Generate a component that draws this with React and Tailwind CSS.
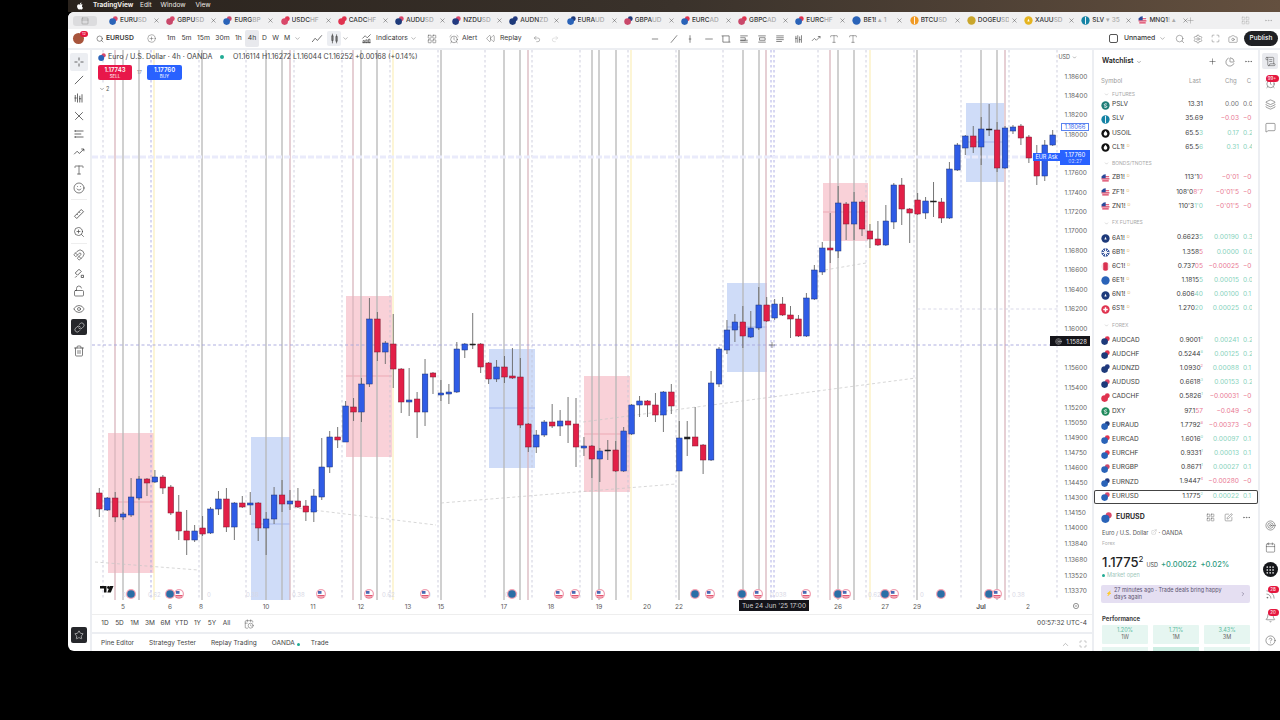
import React from "react";
import { FaApple } from "react-icons/fa";
import {
  AlarmClock, Bell, Calendar, CalendarClock, Camera, ChartPie, ChevronDown, ChevronRight, ChevronUp, CircleHelp, CirclePlus,
  Ellipsis, ExternalLink, Eye, Grip, Layers, LayoutGrid, Link, LockOpen, Magnet, Maximize, MessageSquare, PanelTop, Plus,
  Rewind, Redo2, Rss, ScrollText, Search, Settings, Smile, SquarePen, Star, Target, Trash2, Type, Undo2, X, ZoomIn,
} from "lucide-react";

const CUR = { EUR: "#2a63b8", USD: "#d9486a", GBP: "#c9486a", CHF: "#e0334f", CAD: "#e0334f", AUD: "#1e3a7a", NZD: "#233a80" };

function PairIcon({ a, b, size = 9 }) {
  return (
    <svg width={size} height={size} viewBox="0 0 10 10" className="shrink-0">
      <circle cx="7" cy="3" r="2.7" fill={CUR[b]} />
      <circle cx="4" cy="6.2" r="3.7" fill={CUR[a]} />
    </svg>
  );
}

function Flag({ size = 9 }) {
  return (
    <svg width={size} height={size} viewBox="0 0 10 10" className="shrink-0">
      <circle cx="5" cy="5" r="4.6" fill="#fff" />
      <path d="M1 3h8M.6 5.4h8.8M1.4 7.6h7.2" stroke="#d9365a" strokeWidth="1.2" />
      <path d="M1 2.4A4.6 4.6 0 0 1 5.2.4v4.4H.5c0-.9.1-1.7.5-2.4z" fill="#2b4a9b" />
    </svg>
  );
}

function Disc({ color, size = 9, mark }) {
  return (
    <svg width={size} height={size} viewBox="0 0 10 10" className="shrink-0">
      <circle cx="5" cy="5" r="4.6" fill={color} />
      {mark === "drop" && <path d="M5 2c1.3 1.6 2 2.5 2 3.5a2 2 0 0 1-4 0C3 4.5 3.7 3.6 5 2z" fill="#fff" />}
      {mark === "bar" && <path d="M5 1v8" stroke="#fff" strokeWidth="1" />}
      {mark === "cross" && <path d="M5 2.5v5M2.5 5h5" stroke="#fff" strokeWidth="1.6" />}
      {mark === "leaf" && <path d="M5 3l1.3 3H3.7z" fill="#fff" />}
      {mark === "gb" && <path d="M1 1l8 8M9 1l-8 8M5 .5v9M.5 5h9" stroke="#fff" strokeWidth="1" />}
      {mark === "ca" && <path d="M0 0h2.5v10H0zM7.5 0H10v10H7.5z" fill="#fff" opacity=".85" />}
      {mark === "s" && <path d="M6.5 3.500C5.500 2.800 3.600 3 3.600 4.200S6.500 5.200 6.500 6.300 4.500 7.300 3.500 6.500" fill="none" stroke="#fff" strokeWidth="1" />}
    </svg>
  );
}

const TABS = [
  ["EURU", "SD", <PairIcon key="0" a="EUR" b="USD" />],
  ["GBPU", "SD", <PairIcon key="1" a="GBP" b="USD" />],
  ["EURG", "BP", <PairIcon key="2" a="EUR" b="GBP" />],
  ["USDC", "HF", <PairIcon key="3" a="USD" b="CHF" />],
  ["CADC", "HF", <PairIcon key="4" a="CAD" b="CHF" />],
  ["AUDU", "SD", <PairIcon key="5" a="AUD" b="USD" />],
  ["NZDU", "SD", <PairIcon key="6" a="NZD" b="USD" />],
  ["AUDN", "ZD", <PairIcon key="7" a="AUD" b="NZD" />],
  ["EURA", "UD", <PairIcon key="8" a="EUR" b="AUD" />],
  ["GBPA", "UD", <PairIcon key="9" a="GBP" b="AUD" />],
  ["EURC", "AD", <PairIcon key="10" a="EUR" b="CAD" />],
  ["GBPC", "AD", <PairIcon key="11" a="GBP" b="CAD" />],
  ["EURC", "HF", <PairIcon key="12" a="EUR" b="CHF" />],
  ["BE1!", " ▴ 1", <Disc key="13" color="#2a63b8" />],
  ["BTCU", "SD", <Disc key="14" color="#f09a24" mark="bar" />],
  ["DOGEU", "SD", <Disc key="15" color="#c9a62c" />],
  ["XAUU", "SD", <Disc key="16" color="#e5b420" mark="leaf" />],
  ["SLV", " ▾ 35", <Disc key="17" color="#1583a5" mark="bar" />],
  ["MNQ1", "! ▴", <Flag key="18" />],
];

// top, bottom, wick top, wick bottom, colour (page pixels)
const CANDLES = [
  [493,509,488,517,"r"],[498,510,497,511,"b"],[498,517,492,522,"r"],[514,517,512,520,"b"],[497,515,478,517,"b"],[479,498,476,500,"b"],
  [479,483,478,496,"r"],[477,482,470,483,"b"],[477,488,475,494,"r"],[487,513,485,515,"r"],[512,531,495,540,"r"],[531,540,510,555,"r"],
  [531,540,525,542,"b"],[528,534,516,536,"r"],[509,533,507,534,"b"],[499,509,491,515,"b"],[499,527,488,532,"r"],[503,527,502,540,"b"],
  [503,507,496,508,"r"],[503,505,492,515,"b"],[503,528,502,541,"r"],[519,528,512,555,"b"],[495,519,487,524,"b"],[495,504,480,512,"r"],
  [501,504,490,510,"b"],[501,507,488,508,"r"],[506,512,500,521,"r"],[496,512,489,522,"b"],[467,497,438,500,"b"],[437,467,431,473,"b"],
  [437,440,427,448,"r"],[406,442,401,442,"b"],[407,412,398,421,"r"],[384,412,378,422,"b"],[319,384,298,387,"b"],[319,352,312,361,"r"],
  [343,352,341,364,"b"],[344,369,314,388,"r"],[369,402,368,413,"r"],[400,402,368,416,"b"],[399,412,392,438,"r"],[374,412,359,426,"b"],
  [373,377,372,394,"r"],[393,395,380,401,"b"],[392,394,384,404,"b"],[349,392,342,393,"b"],[344,350,343,358,"b"],[344,345,313,349,"d"],
  [344,367,343,373,"r"],[363,379,362,384,"r"],[367,379,360,382,"b"],[367,377,356,383,"r"],[376,378,348,379,"r"],[377,425,358,428,"r"],
  [424,447,423,452,"r"],[435,447,430,453,"b"],[422,435,420,437,"b"],[422,426,404,428,"r"],[421,426,410,436,"b"],[421,425,397,443,"r"],
  [424,447,398,467,"r"],[446,448,437,456,"b"],[446,459,445,478,"r"],[451,459,448,482,"b"],[450,451,440,460,"d"],[450,471,441,472,"r"],
  [431,471,427,472,"b"],[405,434,404,435,"b"],[401,405,396,417,"b"],[401,405,400,417,"r"],[405,415,393,422,"r"],[392,415,391,432,"b"],
  [392,406,384,414,"r"],[438,471,421,471,"b"],[437,439,421,456,"d"],[437,446,407,446,"r"],[445,460,444,474,"r"],[383,460,371,461,"b"],
  [349,384,347,387,"b"],[330,350,320,354,"b"],[322,330,314,342,"b"],[322,336,306,348,"r"],[328,337,311,338,"b"],[305,328,287,330,"b"],
  [305,321,297,322,"r"],[304,318,299,320,"b"],[304,315,297,316,"r"],[315,319,306,338,"r"],[319,336,315,337,"r"],[298,336,293,337,"b"],
  [270,299,265,300,"b"],[248,272,242,275,"b"],[248,250,213,263,"r"],[203,251,186,258,"b"],[204,224,202,240,"r"],[202,224,192,240,"b"],
  [202,229,200,236,"r"],[231,239,224,248,"r"],[239,245,221,246,"r"],[221,245,205,246,"b"],[185,222,183,229,"b"],[185,209,178,225,"r"],
  [209,213,208,243,"r"],[200,214,193,215,"r"],[201,213,197,219,"b"],[201,202,182,217,"d"],[202,218,198,223,"r"],[169,218,162,219,"b"],
  [145,170,143,171,"b"],[136,148,135,155,"b"],[136,147,126,153,"r"],[129,147,117,165,"b"],[129,130,104,136,"d"],[130,168,122,172,"r"],
  [128,168,126,169,"b"],[127,131,125,134,"b"],[126,138,124,145,"r"],[137,158,135,163,"r"],[158,176,145,185,"r"],[145,176,140,181,"b"],
  [135,145,130,146,"b"],
];

const ZONES = [
  [108, 433, 46, 140, "#f9d1d8", 502, "#e79aa8"],
  [251, 437, 39, 163, "#cfdcf8", 524, "#8fa8ea"],
  [346, 296, 46, 161, "#f9d1d8", 376, "#e79aa8"],
  [489, 349, 46, 119, "#cfdcf8", 408, "#8fa8ea"],
  [584, 376, 46, 116, "#f9d1d8", 434, "#e79aa8"],
  [727, 283, 40, 89, "#cfdcf8", 327, "#8fa8ea"],
  [823, 183, 45, 58, "#f9d1d8", 212, "#e79aa8"],
  [966, 103, 38, 79, "#cfdcf8", 142, "#8fa8ea"],
];

const DASHED = [103, 199, 246, 294, 342, 390, 438, 485, 532, 580, 628, 676, 723, 818, 866, 914, 961, 1009, 1057];
const DASHED_BLUE = [151, 771, 774];
const GRAY = [123, 139, 202, 266, 282, 361, 377, 441, 504, 520, 592, 599, 616, 679, 743, 759, 838, 854, 917, 981, 997];
const PINK = [115, 290, 353, 528, 766, 830, 1005];
const YELLOW = [154, 393, 631, 870];

const PRICES = [
  [76,"1.18600"],[95,"1.18400"],[114,"1.18200"],[134,"1.18000"],[172,"1.17600"],[192,"1.17400"],[211,"1.17200"],[230,"1.17000"],
  [250,"1.16800"],[269,"1.16600"],[289,"1.16400"],[308,"1.16200"],[328,"1.16000"],[367,"1.15600"],[387,"1.15400"],[407,"1.15200"],
  [422,"1.15050"],[437,"1.14900"],[452,"1.14750"],[467,"1.14600"],[482,"1.14450"],[497,"1.14300"],[512,"1.14150"],[527,"1.14000"],
  [543,"1.13840"],[559,"1.13680"],[575,"1.13520"],[590,"1.13370"],
];

const DATES = [[123,"5"],[170,"6"],[201,"8"],[266,"10"],[313,"11"],[361,"12"],[408,"13"],[441,"15"],[504,"17"],[551,"18"],[599,"19"],[647,"20"],[679,"22"],[838,"26"],[885,"27"],[917,"29"],[981,"Jul"],[1028,"2"]];

const EVENTS = [[131,"b"],[170,"b"],[179,"u"],[321,"u"],[369,"u"],[425,"u"],[512,"b"],[559,"u"],[575,"u"],[600,"u"],[695,"b"],[710,"u"],[742,"b"],[758,"u"],[806,"u"],[838,"b"],[846,"u"],[885,"b"],[894,"u"],[941,"b"],[989,"b"],[997,"u"]];

const GHOSTS = [[122,"0.62"],[148,"0.62"],[207,"0"],[246,"0.38"],[292,"0.38"],[382,"0.62"],[427,"0"],[505,"0.62"],[770,"0.038"],[868,"0.62"],[920,"0"],[1012,"0.38"]];

function Chart() {
  return (
    <svg viewBox="92 50 1000 564" className="absolute inset-0 w-full h-full">
      <defs>
        <clipPath id="plot"><rect x="92" y="50" width="968" height="550" /></clipPath>
      </defs>
      <g clipPath="url(#plot)">
        {ZONES.map(([x, y, w, h, fill, my, mc]) => (
          <g key={x}>
            <rect x={x} y={y} width={w} height={h} fill={fill} />
            <path d={`M${x} ${my}h${w}`} stroke={mc} strokeWidth=".7" />
          </g>
        ))}
        {DASHED.map((x) => <path key={x} d={`M${x} 50V600`} stroke="#c3c3d6" strokeWidth=".8" strokeDasharray="2.5 2.5" />)}
        {DASHED_BLUE.map((x) => <path key={x} d={`M${x} 50V600`} stroke="#9d9de0" strokeWidth=".8" strokeDasharray="2.5 2.5" />)}
        {YELLOW.map((x) => <path key={x} d={`M${x} 50V600`} stroke="#fbeeb9" strokeWidth="1.2" />)}
        {PINK.map((x) => <path key={x} d={`M${x} 50V600`} stroke="#d9b5bd" strokeWidth="1.3" />)}
        {GRAY.map((x) => <path key={x} d={`M${x} 50V600`} stroke="#b7b7b7" strokeWidth="1.3" />)}
        <path d="M92 157H1060" stroke="#eaebfb" strokeWidth="3" strokeDasharray="6 2" />
        <path d="M92 345H1060" stroke="#a6a6de" strokeWidth=".9" strokeDasharray="3 2.5" />
        <path d="M917 309H1060" stroke="#cfcfe2" strokeWidth=".8" strokeDasharray="3 2.5" />
        <path d="M95 562L198 570M288 507L436 525M441 503L676 484M583 422L916 378M825 270L866 263" stroke="#c6c6c6" strokeWidth=".7" strokeDasharray="3 2.5" fill="none" />
        {CANDLES.map(([t, b, wt, wb, c], i) => {
          const x = 99.3 + 7.945 * i;
          const fill = c === "b" ? "#2f5ce6" : c === "r" ? "#e21f47" : "#222";
          const edge = c === "b" ? "#1d3276" : c === "r" ? "#7d1930" : "#222";
          return (
            <g key={i}>
              <path d={`M${x} ${wt}V${wb}`} stroke="#666" strokeWidth=".9" />
              <rect x={x - 2.8} y={t} width="5.6" height={Math.max(b - t, 1)} fill={fill} stroke={edge} strokeWidth=".5" />
            </g>
          );
        })}
        <path d="M769 345h6M772 342v6" stroke="#555" strokeWidth=".6" />
      </g>
      {GHOSTS.map(([x, t]) => <text key={x} x={x} y="597" fontSize="6" fill="#d8d8e6">{t}</text>)}
      {EVENTS.map(([x, k]) => (
        <g key={x}>
          <circle cx={x} cy="594" r="5" fill="#f0a0b2" />
          <circle cx={x} cy="594" r="3.8" fill={k === "b" ? "#2a6ea6" : "#fff"} />
          {k === "u" && <path d={`M${x - 3.5} 595.5h7M${x - 3} 597h6`} stroke="#e0425f" strokeWidth=".9" />}
          {k === "u" && <rect x={x - 3} y="591" width="3.5" height="2.8" fill="#4a6ab4" />}
        </g>
      ))}
      <g fill="#111">
        <path d="M100 586h6.5v6.5h-2.5v-4h-4z" />
        <circle cx="108.5" cy="587.5" r="1.4" />
        <path d="M110 586h3.5l-2.7 6.5h-3.5z" />
      </g>
      {PRICES.map(([y, t]) => <text key={y} x="1064.5" y={y + 2.5} fontSize="6.5" fill="#666">{t}</text>)}
      {DATES.map(([x, t]) => (
        <text key={x} x={x} y="609" fontSize="6.5" textAnchor="middle" fill="#5a5a5a" fontWeight={t === "Jul" ? 700 : 400}>{t}</text>
      ))}
      <rect x="739" y="600" width="70" height="11" fill="#14141a" />
      <text x="774" y="608" fontSize="6.5" textAnchor="middle" fill="#d0d0d0">Tue 24 Jun '25  17:00</text>
      <circle cx="1076" cy="606" r="2.6" fill="none" stroke="#666" strokeWidth=".7" />
      <path d="M1074.8 606h2.4" stroke="#666" strokeWidth=".7" />
    </svg>
  );
}

const TOOL = "w-[12px] h-[12px] text-[#3a3a3a]";

function Glyph({ d, className = TOOL }) {
  return (
    <svg viewBox="0 0 16 16" className={className} fill="none" stroke="currentColor" strokeWidth="1">
      <path d={d} />
    </svg>
  );
}

function ToolSlot({ children, active }) {
  return (
    <div className={`flex items-center justify-center h-[18px] w-[18px] rounded-[2px] ${active ? "bg-[#eceef2]" : ""}`}>{children}</div>
  );
}

function LeftTools() {
  return (
    <div className="w-[24px] shrink-0 h-full flex flex-col items-center pt-[3px] border-r-2 border-[#eceef2]">
      <ToolSlot active><Glyph d="M8 2v4M8 10v4M2 8h4M10 8h4" /></ToolSlot>
      <ToolSlot><Glyph d="M2.5 13.5l11-11" /></ToolSlot>
      <ToolSlot><Glyph d="M3 4v9M6 2v12M9 5v9M12 3v11M2 8h3M8 9h3" /></ToolSlot>
      <ToolSlot><Glyph d="M3 3l5 5-5 5M13 3L8 8l5 5M3 3h.5M13 13h.5" /></ToolSlot>
      <ToolSlot><Glyph d="M2 4h12M2 8h9M2 12h12M3 3v2M3 11v2" /></ToolSlot>
      <ToolSlot><Glyph d="M1.5 11l4-4 3 3 6-6M11 4h3.500v3" /></ToolSlot>
      <ToolSlot><Type className={TOOL} strokeWidth={1.3} /></ToolSlot>
      <ToolSlot><Smile className={TOOL} strokeWidth={1.3} /></ToolSlot>
      <div className="w-[16px] border-t border-[#eee] mt-[2px] mb-[5px]" />
      <ToolSlot><Glyph d="M2 11L11 2l3 3-9 9zM5 8l1.5 1.5M8 5l1.5 1.5" /></ToolSlot>
      <ToolSlot><ZoomIn className={TOOL} strokeWidth={1.3} /></ToolSlot>
      <div className="w-[16px] border-t border-[#eee] mt-[2px] mb-[2px]" />
      <ToolSlot><Magnet className={TOOL} strokeWidth={1.3} /></ToolSlot>
      <ToolSlot><Glyph d="M3 8l5-5 3 3-5 5zM11 11h3v3h-3zM5 12l-2 2" /></ToolSlot>
      <ToolSlot><LockOpen className={TOOL} strokeWidth={1.3} /></ToolSlot>
      <ToolSlot><Eye className={TOOL} strokeWidth={1.3} /></ToolSlot>
      <div className="w-[16px] h-[16px] rounded-[2px] bg-[#26272b] flex items-center justify-center mt-[1px]">
        <Link className="w-[11px] h-[11px] text-[#d8d8d8]" strokeWidth={1.5} />
      </div>
      <div className="h-[7px]" />
      <ToolSlot><Trash2 className={TOOL} strokeWidth={1.3} /></ToolSlot>
      <div className="flex-1" />
      <div className="w-[16px] h-[16px] rounded-[2px] bg-[#26272b] flex items-center justify-center mb-[8px]">
        <Star className="w-[10px] h-[10px] text-[#e0e0e0]" strokeWidth={1.5} />
      </div>
    </div>
  );
}

function MenuBar() {
  return (
    <div className="ml-[68px] h-[12px] flex items-center text-[6.5px] text-[#f0ece8] bg-gradient-to-r from-[#2a231d] via-[#3a322b] to-[#64503f]">
      <FaApple className="w-[8px] h-[8px] ml-[8px] mr-[9px] text-white" />
      <span className="w-[38px] font-bold">TradingView</span>
      <span className="ml-[9px]">Edit</span>
      <span className="ml-[9px]">Window</span>
      <span className="ml-[10px]">View</span>
    </div>
  );
}

function TabBar() {
  return (
    <div className="h-[17px] flex items-center bg-[#f0f0f1]">
      <div className="w-[24px] h-[10px] ml-[5px] mr-[11px] bg-[#dcdcde] rounded-[3px] flex items-center justify-center">
        <PanelTop className="w-[8px] h-[8px] text-[#777]" strokeWidth={1.2} />
      </div>
      {TABS.map(([head, tail, icon], i) => (
        <div key={i} className="w-[57.2px] shrink-0 flex items-center gap-[2px] pl-[1px] text-[6.5px] font-medium text-[#333]">
          {icon}
          <span className="w-[31px] overflow-hidden whitespace-nowrap">
            {head}<span className="text-[#aaa]">{tail}</span>
          </span>
          <X className="w-[7px] h-[7px] text-[#444]" strokeWidth={1.5} />
        </div>
      ))}
      <Plus className="w-[9px] h-[9px] ml-[-9px] text-[#888]" strokeWidth={1.2} />
      <div className="flex-1" />
      <LayoutGrid className="w-[9px] h-[9px] text-[#aaa] mr-[14px]" strokeWidth={1.2} />
      <Ellipsis className="w-[9px] h-[9px] text-[#aaa] mr-[7px]" strokeWidth={1.5} />
    </div>
  );
}

function Tf({ w, on, children }) {
  return <span className={`shrink-0 text-center rounded-[2px] ${w} ${on ? "bg-[#e8e9ed] py-[3px]" : ""}`}>{children}</span>;
}

const TB = "w-[10px] h-[10px] text-[#444] shrink-0";

function TopBar() {
  return (
    <div className="h-[19px] flex items-center text-[6.8px] text-[#3a3a3a] relative">
      <div className="relative ml-[5px] w-[11px] h-[11px] rounded-full bg-[#a8553c] shrink-0">
        <span className="absolute -top-[2px] -right-[4px] w-[8px] h-[6px] rounded-full bg-[#e5173f] text-white text-[4px] leading-[6px] text-center">12</span>
      </div>
      <Search className="w-[8px] h-[8px] ml-[12px] text-[#333]" strokeWidth={1.5} />
      <span className="ml-[2px] font-semibold w-[33px]">EURUSD</span>
      <CirclePlus className="ml-[8px] w-[9px] h-[9px] text-[#444]" strokeWidth={1.1} />
      <div className="flex items-center ml-[7px]">
        <Tf w="w-[16px]">1m</Tf>
        <Tf w="w-[15px]">5m</Tf>
        <Tf w="w-[19px]">15m</Tf>
        <Tf w="w-[19px]">30m</Tf>
        <Tf w="w-[13px]">1h</Tf>
        <Tf w="w-[14px]" on>4h</Tf>
        <Tf w="w-[11px]">D</Tf>
        <Tf w="w-[11px]">W</Tf>
        <Tf w="w-[12px]">M</Tf>
      </div>
      <ChevronDown className="ml-[1px] w-[7px] h-[7px] text-[#888]" />
      <svg viewBox="0 0 16 16" className="ml-[10px] w-[12px] h-[12px] text-[#444]" fill="none" stroke="currentColor"><path d="M1.5 12l4-5 3 3 6-7" /></svg>
      <div className="ml-[4px] w-[14px] h-[15px] bg-[#eceef2] rounded-[2px] flex items-center justify-center">
        <svg viewBox="0 0 16 16" className="w-[11px] h-[11px] text-[#444]" fill="none" stroke="currentColor"><path d="M5 1v14M4 4h2v7H4zM11 2v13M10 5h2v7h-2z" /></svg>
      </div>
      <ChevronDown className="ml-[1px] w-[7px] h-[7px] text-[#888]" />
      <svg viewBox="0 0 16 16" className="ml-[12px] w-[11px] h-[11px] text-[#444]" fill="none" stroke="currentColor"><path d="M2 8l4-4 3 3 5-5M2 14h12M3 11h2v3H3zM7 10h2v4H7zM11 9h2v5h-2z" /></svg>
      <span className="ml-[2px] w-[36px] text-center">Indicators</span>
      <ChevronDown className="w-[7px] h-[7px] text-[#888]" />
      <LayoutGrid className="ml-[10px] w-[10px] h-[10px] text-[#444]" strokeWidth={1.1} />
      <AlarmClock className="ml-[12px] w-[10px] h-[10px] text-[#444]" strokeWidth={1.1} />
      <span className="ml-[3px] w-[16px]">Alert</span>
      <Rewind className="ml-[8px] w-[9px] h-[9px] text-[#444]" strokeWidth={1.1} />
      <span className="ml-[5px] w-[24px]">Replay</span>
      <Undo2 className="ml-[9px] w-[8px] h-[8px] text-[#555]" strokeWidth={1.2} />
      <Redo2 className="ml-[10px] w-[8px] h-[8px] text-[#bbb]" strokeWidth={1.2} />
      <div className="ml-[91px] flex items-center">
        <Glyph className={TB} d="M3 8h10" />
        <Glyph className={`${TB} ml-[9px]`} d="M3 14L13 2" />
        <Glyph className={`${TB} ml-[6px]`} d="M8 2v12M6 8h4" />
        <Glyph className={`${TB} ml-[9px]`} d="M2 8h12" />
        <Glyph className={`${TB} ml-[7px]`} d="M3 3h10v10H3zM1 3h2M13 13h2" />
        <Glyph className={`${TB} ml-[8px]`} d="M2 3h12M2 6h8v4H2M2 10h12M2 13h12" />
        <Glyph className={`${TB} ml-[8px]`} d="M2 3h12M4 6h9v4H4zM2 13h12" />
        <Glyph className={`${TB} ml-[8px]`} d="M2 3h12M2 6h12M2 9h12M2 12h9" />
        <Glyph className={`${TB} ml-[9px]`} d="M3 3v11M6 2v12M9 4v10M12 2v12M2 7h3M8 9h3" />
        <Glyph className={`${TB} ml-[7px]`} d="M1.5 11l4-4 3 3 6-6M11 4h3.500v3" />
        <Type className={`${TB} ml-[8px]`} strokeWidth={1.1} />
        <Type className={`${TB} ml-[9px]`} strokeWidth={1.1} />
      </div>
      <div className="flex-1" />
      <span className="w-[9px] h-[9px] border border-[#555] rounded-[2px] shrink-0" />
      <span className="ml-[6px] w-[30px] font-medium">Unnamed</span>
      <ChevronDown className="ml-[5px] w-[7px] h-[7px] text-[#888]" />
      <Search className="ml-[9px] w-[10px] h-[10px] text-[#555]" strokeWidth={1.1} />
      <Settings className="ml-[8px] w-[10px] h-[10px] text-[#555]" strokeWidth={1.1} />
      <Maximize className="ml-[8px] w-[9px] h-[9px] text-[#555]" strokeWidth={1.1} />
      <Camera className="ml-[8px] w-[10px] h-[10px] text-[#555]" strokeWidth={1.1} />
      <span className="ml-[6px] mr-[2px] w-[34px] h-[15px] rounded-full bg-[#1f2024] text-white text-center leading-[15px] text-[6.5px] font-medium">Publish</span>
    </div>
  );
}

function ChartOverlay() {
  return (
    <>
      <div className="absolute left-[6px] top-[2px] flex items-center text-[7.2px] text-[#444] whitespace-nowrap">
        <PairIcon a="EUR" b="USD" size={8} />
        <span className="ml-[2px] w-[112px]">Euro / U.S. Dollar · 4h · OANDA</span>
        <span className="w-[4px] h-[4px] rounded-full bg-[#22ab94]" />
        <span className="ml-[9px] text-[7px]">O1.16114 H1.16272 L1.16044 C1.16252 +0.00168 (+0.14%)</span>
      </div>
      <div className="absolute left-[6px] top-[15px] flex items-center text-white text-center">
        <div className="w-[34px] h-[15px] rounded-[2px] bg-[#e8174a] leading-[7px] pt-[1px]">
          <div className="text-[6px] font-semibold">1.17743</div>
          <div className="text-[4.5px]">SELL</div>
        </div>
        <span className="w-[15px] text-[5px] text-[#888]">17</span>
        <div className="w-[35px] h-[15px] rounded-[2px] bg-[#2962ff] leading-[7px] pt-[1px]">
          <div className="text-[6px] font-semibold">1.17760</div>
          <div className="text-[4.5px]">BUY</div>
        </div>
      </div>
      <div className="absolute left-[7px] top-[35px] flex items-center gap-[1px] bg-white text-[5.5px] text-[#555]">
        <ChevronDown className="w-[6px] h-[6px]" />2
      </div>
      <div className="absolute right-[15px] top-[3px] flex items-center text-[5.5px] text-[#555]">
        USD<ChevronDown className="w-[5px] h-[5px] ml-[2px]" />
      </div>
      <div className="absolute right-[3px] top-[73px] w-[28px] h-[8px] border border-[#5b84f0] bg-white text-[#3d6cec] text-[6px] leading-[6px] text-center">1.18066</div>
      <div className="absolute left-[941px] top-[103px] w-[27px] h-[8px] bg-[#2962ff] text-white text-[5.5px] leading-[8px] text-center">EUR Ask</div>
      <div className="absolute right-[2px] top-[100px] w-[30px] h-[15px] bg-[#2962ff] text-white text-[6px] leading-[7px] text-center pt-[1px]">
        <div>1.17760</div>
        <div className="text-[5px] text-[#c9d6ff]">02:27</div>
      </div>
      <div className="absolute right-[2px] top-[286px] w-[40px] h-[10px] bg-[#15151a] text-[#e8e8e8] text-[6px] flex items-center justify-end pr-[3px] gap-[4px]">
        <Target className="w-[7px] h-[7px]" strokeWidth={1.3} />
        <span>1.15828</span>
      </div>
    </>
  );
}

const RANGE = [["1D", "w-[14px]"], ["5D", "w-[15px]"], ["1M", "w-[15px]"], ["3M", "w-[16px]"], ["6M", "w-[15px]"], ["YTD", "w-[17px]"], ["1Y", "w-[15px]"], ["5Y", "w-[14px]"], ["All", "w-[15px]"]];

function RangeBar() {
  return (
    <div className="h-[18px] flex items-center border-t border-[#eee] text-[6.5px] text-[#444] pl-[6px]">
      {RANGE.map(([t, w]) => (
        <span key={t} className={`text-center shrink-0 ${w}`}>{t}</span>
      ))}
      <CalendarClock className="ml-[10px] w-[10px] h-[10px] text-[#444]" strokeWidth={1.1} />
      <span className="ml-auto mr-[5px]">00:57:32 UTC-4</span>
    </div>
  );
}

function BottomBar() {
  return (
    <div className="flex-1 flex items-center border-t-2 border-[#eceef2] text-[6.5px] text-[#444] pl-[9px] pt-[3px]">
      <span>Pine Editor</span>
      <span className="ml-[15px]">Strategy Tester</span>
      <span className="ml-[15px]">Replay Trading</span>
      <span className="ml-[15px]">OANDA</span>
      <span className="ml-[2px] w-[3px] h-[3px] rounded-full bg-[#22ab94]" />
      <span className="ml-[11px]">Trade</span>
      <ChevronUp className="ml-auto w-[9px] h-[9px] text-[#777]" strokeWidth={1.2} />
      <Maximize className="ml-[9px] mr-[5px] w-[8px] h-[8px] text-[#777]" strokeWidth={1.2} />
    </div>
  );
}

const G = "#88d3bd";
const R = "#e97a94";

const SECTIONS = [
  ["FUTURES", "h-[13px]", [
    ["PSLV", <Disc key="i" color="#1f7d78" mark="s" />, "", "13.31", "", "", "0.00", "#777", "0.0", true],
    ["SLV", <Disc key="i" color="#1583a5" mark="bar" />, "", "35.69", "", "", "−0.03", R, "−0"],
    ["USOIL", <Disc key="i" color="#111" mark="drop" />, "", "65.5", "3", G, "0.17", G, "0.2"],
    ["CL1!", <Disc key="i" color="#111" mark="drop" />, "D", "65.5", "6", G, "0.31", G, "0.4"],
  ]],
  ["BONDS/TNOTES", "h-[16.5px]", [
    ["ZB1!", <Flag key="i" />, "D", "113'1", "0", R, "−0'01", R, "−0"],
    ["ZF1!", <Flag key="i" />, "D", "108'0", "8'7", R, "−0'01'5", R, "−0"],
    ["ZN1!", <Flag key="i" />, "D", "110'3", "1'0", G, "−0'01'5", R, "−0"],
  ]],
  ["FX FUTURES", "h-[17.5px]", [
    ["6A1!", <Disc key="i" color="#1e3a7a" mark="leaf" />, "D", "0.6623", "5", G, "0.00190", G, "0.3"],
    ["6B1!", <Disc key="i" color="#3d5a9e" mark="gb" />, "D", "1.358", "5", R, "0.0000", G, "0.0"],
    ["6C1!", <Disc key="i" color="#d9304f" mark="ca" />, "D", "0.737", "05", R, "−0.00025", R, "−0"],
    ["6E1!", <Disc key="i" color="#2a63b8" />, "D", "1.1815", "5", G, "0.00015", G, "0.0"],
    ["6N1!", <Disc key="i" color="#1e3a7a" mark="leaf" />, "D", "0.606", "40", G, "0.00100", G, "0.1"],
    ["6S1!", <Disc key="i" color="#e0334f" mark="cross" />, "D", "1.270", "20", G, "0.00025", G, "0.0"],
  ]],
  ["FOREX", "h-[17px]", [
    ["AUDCAD", <PairIcon key="i" a="AUD" b="CAD" />, "", "0.9001", "8", G, "0.00241", G, "0.2", false, true],
    ["AUDCHF", <PairIcon key="i" a="AUD" b="CHF" />, "", "0.5244", "8", G, "0.00125", G, "0.2", false, true],
    ["AUDNZD", <PairIcon key="i" a="AUD" b="NZD" />, "", "1.0930", "2", R, "0.00088", G, "0.1", false, true],
    ["AUDUSD", <PairIcon key="i" a="AUD" b="USD" />, "", "0.6618", "3", G, "0.00153", G, "0.2", false, true],
    ["CADCHF", <PairIcon key="i" a="CAD" b="CHF" />, "", "0.5826", "1", G, "−0.00031", R, "−0", false, true],
    ["DXY", <Disc key="i" color="#1f8a5c" mark="s" />, "", "97.1", "57", R, "−0.049", R, "−0"],
    ["EURAUD", <PairIcon key="i" a="EUR" b="AUD" />, "", "1.7792", "8", R, "−0.00373", R, "−0", false, true],
    ["EURCAD", <PairIcon key="i" a="EUR" b="CAD" />, "", "1.6016", "0", G, "0.00097", G, "0.1", false, true],
    ["EURCHF", <PairIcon key="i" a="EUR" b="CHF" />, "", "0.9331", "1", G, "0.00013", G, "0.1", false, true],
    ["EURGBP", <PairIcon key="i" a="EUR" b="GBP" />, "", "0.8671", "1", G, "0.00027", G, "0.1", false, true],
    ["EURNZD", <PairIcon key="i" a="EUR" b="NZD" />, "", "1.9447", "4", R, "−0.00280", R, "−0", false, true],
    ["EURUSD", <PairIcon key="i" a="EUR" b="USD" />, "", "1.1775", "2", G, "0.00022", G, "0.1", false, true],
  ]],
];

function Row({ row }) {
  const [sym, icon, mark, last, tail, tailC, chg, chgC, pct, first, small] = row;
  const selected = sym === "EURUSD";
  return (
    <div className={`h-[14.2px] flex items-center whitespace-nowrap text-[6.6px] text-[#3c3c3c] ${first ? "-mt-[3px]" : ""} ${selected ? "rounded-[2px] ring-1 ring-[#444] ring-inset" : ""}`}>
      <span className="ml-[7px] w-[11px] shrink-0">{icon}</span>
      <span className="flex-1 flex items-start">
        <span className="text-[6.5px]">{sym}</span>
        <span className="ml-[2px] text-[4px] leading-[6px] text-[#e5b660]">{mark}</span>
      </span>
      <span className="w-[40px] text-right">
        {last}
        <span className={small ? "text-[4px] align-super leading-[0]" : ""} style={{ color: tailC }}>{tail}</span>
      </span>
      <span className="w-[36px] text-right" style={{ color: chgC }}>{chg}</span>
      <span className="ml-[4px] mr-[6px] w-[9px] overflow-hidden" style={{ color: chgC }}>{pct}</span>
    </div>
  );
}

function Watchlist() {
  return (
    <div className="w-[164px] shrink-0 h-full flex flex-col overflow-hidden">
      <div className="h-[23px] shrink-0 flex items-center pl-[8px] text-[7px] font-semibold text-[#222]">
        Watchlist
        <ChevronDown className="ml-[2px] w-[6px] h-[6px] text-[#666]" />
        <Plus className="ml-[66px] w-[9px] h-[9px] text-[#333]" strokeWidth={1.3} />
        <ChartPie className="ml-[8.5px] w-[10px] h-[10px] text-[#333]" strokeWidth={1.1} />
        <Ellipsis className="ml-[8.5px] w-[9px] h-[9px] text-[#555]" strokeWidth={1.5} />
      </div>
      <div className="h-[15px] shrink-0 flex items-center text-[6px] text-[#9a9a9a] pl-[7px]">
        <span className="w-[87px]">Symbol</span>
        <span className="w-[12px] ml-[1px]">Last</span>
        <span className="ml-[24px]">Chg</span>
        <span className="ml-[10px]">C</span>
      </div>
      {SECTIONS.map(([title, h, rows]) => (
        <div key={title}>
          <div className={`${h} relative z-10 bg-white flex items-center pl-[10px] gap-[3px] text-[5px] text-[#a8a8a8] ${title === "FUTURES" ? "" : "pt-[1px]"}`}>
            <ChevronDown className="w-[5px] h-[5px]" />
            {title}
          </div>
          {rows.map((r) => <Row key={r[0]} row={r} />)}
        </div>
      ))}
      <div className="h-[27px] shrink-0 flex items-center pl-[7px] text-[7px] font-bold text-[#333]">
        <PairIcon a="EUR" b="USD" size={11} />
        <span className="ml-[4px] w-[71px]">EURUSD</span>
        <LayoutGrid className="ml-[19px] w-[9px] h-[9px] text-[#444]" strokeWidth={1.1} />
        <SquarePen className="ml-[9px] w-[9px] h-[9px] text-[#444]" strokeWidth={1.1} />
        <Ellipsis className="ml-[9px] w-[9px] h-[9px] text-[#555]" strokeWidth={1.5} />
      </div>
      <div className="pl-[8px] -mt-[3px] flex items-center gap-[1px] text-[5.8px] text-[#555] leading-[9px]">
        Euro / U.S. Dollar
        <ExternalLink className="w-[6px] h-[6px] mx-[1px] text-[#999]" strokeWidth={1.2} />
        · OANDA
      </div>
      <div className="pl-[8px] text-[5px] text-[#b0b0b0] leading-[12px]">Forex</div>
      <div className="pl-[8px] mt-[4px] h-[17px] flex items-baseline whitespace-nowrap">
        <span className="text-[13px] font-medium text-[#222]">1.1775</span>
        <span className="text-[8px] self-start text-[#222]">2</span>
        <span className="ml-[3px] text-[5.5px] text-[#444]">USD</span>
        <span className="ml-[3px] text-[7.5px] font-medium text-[#2d9a80]">+0.00022</span>
        <span className="ml-[4px] text-[7.5px] font-medium text-[#2d9a80]">+0.02%</span>
      </div>
      <div className="pl-[8px] flex items-center gap-[2px] text-[5.5px] text-[#a0c8bc] leading-[9px] mt-[1px]">
        <span className="w-[3px] h-[3px] rounded-full bg-[#22ab94]" />Market open
      </div>
      <div className="ml-[7px] mr-[8px] mt-[5px] h-[18px] shrink-0 rounded-[2px] bg-[#e5dff2] flex items-center text-[5.5px] leading-[7px] text-[#5b5470]">
        <span className="ml-[5px] w-[8px] text-[5px]">⚡</span>
        <span className="w-[114px]">27 minutes ago · Trade deals bring happy days again</span>
        <ChevronRight className="ml-auto mr-[4px] w-[6px] h-[6px]" />
      </div>
      <div className="pl-[8px] mt-[11px] text-[6px] font-bold text-[#444] leading-[9px]">Performance</div>
      <div className="ml-[8px] mr-[8px] mt-[2px] grid grid-cols-3 gap-[5px]">
        {[["1.20%", "1W"], ["1.71%", "1M"], ["3.43%", "3M"]].map(([v, t]) => (
          <div key={t} className="h-[19px] bg-[#e6f6f1] rounded-[1px] flex flex-col items-center justify-center text-[5.5px] leading-[7px]">
            <span className="text-[#5cbb9f]">{v}</span>
            <span className="text-[#666]">{t}</span>
          </div>
        ))}
      </div>
      <div className="ml-[8px] mr-[8px] mt-[3px] grid grid-cols-3 gap-[5px]">
        <div className="h-[4px] bg-[#e6f6f1]" />
        <div className="h-[4px] bg-[#cdeee3]" />
        <div className="h-[4px] bg-[#e6f6f1]" />
      </div>
    </div>
  );
}

function Badge({ children, w = "w-[11px]" }) {
  return (
    <span className={`absolute -top-[3px] -right-[3px] ${w} h-[7px] rounded-full bg-[#e5173f] text-white text-[4.5px] leading-[7px] text-center`}>{children}</span>
  );
}

function RightBar() {
  const ic = "w-[11px] h-[11px] text-[#444]";
  return (
    <div className="w-[20px] shrink-0 h-full flex flex-col items-center pt-[3px]">
      <div className="w-[16px] h-[16px] rounded-[2px] bg-[#e9eaee] flex items-center justify-center">
        <ScrollText className={ic} strokeWidth={1.1} />
      </div>
      <div className="relative mt-[9px] h-[12px]">
        <AlarmClock className={ic} strokeWidth={1.1} />
        <Badge w="w-[13px]">99+</Badge>
      </div>
      <Layers className={`${ic} mt-[9px]`} strokeWidth={1.1} />
      <MessageSquare className={`${ic} mt-[12px]`} strokeWidth={1.1} />
      <div className="flex-1" />
      <Target className={ic} strokeWidth={1.1} />
      <Calendar className={`${ic} mt-[11px]`} strokeWidth={1.1} />
      <div className="mt-[9px] w-[15px] h-[15px] rounded-full bg-[#15161a] flex items-center justify-center">
        <Grip className="w-[10px] h-[10px] text-white" strokeWidth={1.6} />
      </div>
      <div className="relative mt-[12px]">
        <Rss className={ic} strokeWidth={1.1} />
        <Badge>28</Badge>
      </div>
      <div className="relative mt-[12px]">
        <Bell className={ic} strokeWidth={1.1} />
        <Badge>20</Badge>
      </div>
      <CircleHelp className={`${ic} mt-[12px] mb-[5px]`} strokeWidth={1.1} />
    </div>
  );
}

export default function App() {
  return (
    <div className="w-[1280px] h-[720px] bg-black overflow-hidden [font-family:Inter,sans-serif]">
      <MenuBar />
      <div className="ml-[68px] h-[639px] bg-white rounded-l-[6px] overflow-hidden flex flex-col">
        <TabBar />
        <TopBar />
        <div className="h-[2px] bg-[#eceef2]" />
        <div className="flex-1 flex min-h-0">
          <LeftTools />
          <div className="w-[1000px] shrink-0 h-full flex flex-col">
            <div className="relative h-[564px] shrink-0">
              <Chart />
              <ChartOverlay />
            </div>
            <RangeBar />
            <BottomBar />
          </div>
          <div className="w-[2px] bg-[#eceef2] shrink-0" />
          <Watchlist />
          <div className="w-[2px] bg-[#eceef2] shrink-0" />
          <RightBar />
        </div>
      </div>
    </div>
  );
}
